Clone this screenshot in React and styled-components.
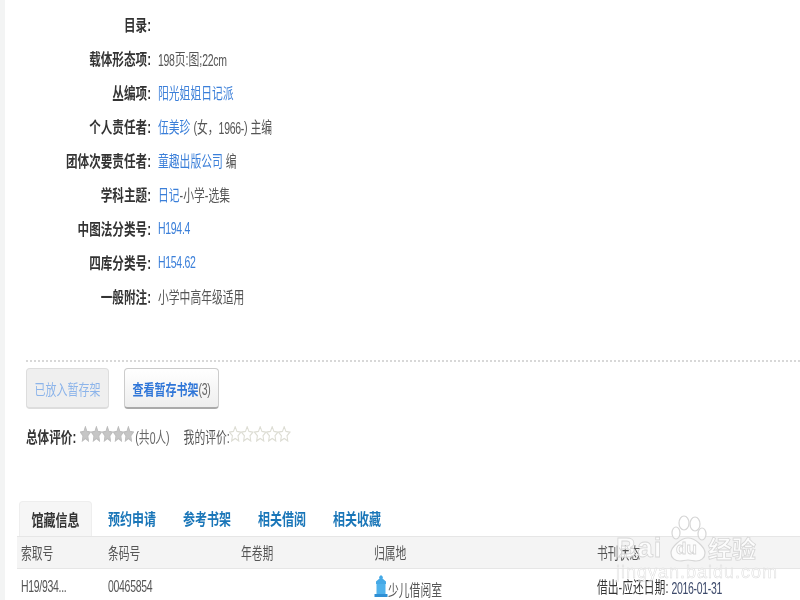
import React from 'react';
import styled, { createGlobalStyle, css } from 'styled-components';

const GlobalStyle = createGlobalStyle`
  html, body {
    margin: 0;
    padding: 0;
    background: #fff;
  }
  body {
    font-family: "Liberation Sans", "Noto Sans CJK SC", sans-serif;
    font-size: 11.6px;
    color: #444;
  }
`;

// the screenshot is squeezed sideways, so the text is taller than it is wide
const tall = css`
  display: inline-block;
  transform: scaleY(1.35);
`;

const tallBody = css`
  display: inline-block;
  font-size: 10.8px;
  transform: scaleY(1.45);
`;

const Page = styled.div`
  position: relative;
  width: 800px;
  height: 600px;
  overflow: hidden;
  box-sizing: border-box;
  border-left: 5px solid #f3f4f4;
  padding: 6.5px 0 0 3px;
  filter: blur(0.35px);
`;

const InfoList = styled.dl`
  margin: 0;
  display: flex;
  flex-direction: column;
`;

const InfoRow = styled.div`
  display: flex;
  align-items: center;
  height: 34.1px;
  gap: 7px;
`;

const Label = styled.dt`
  ${tall}
  width: 143px;
  text-align: right;
  font-weight: bold;
  color: #333;
`;

const Value = styled.dd`
  ${tallBody}
  margin: 0;
  color: #555;
`;

const Link = styled.a`
  color: #3b7fd9;
`;

const Narrow = styled.span`
  display: inline-block;
  font-size: 10.5px;
  letter-spacing: -0.3px;
  transform: scaleY(1.12);
`;

const Divider = styled.div`
  margin: 46.5px 0 0 18px;
  border-top: 2px dotted #d8d8d8;
`;

const Actions = styled.div`
  display: flex;
  gap: 15px;
  margin: 6px 0 0 18px;
`;

const Button = styled.button`
  box-sizing: border-box;
  width: ${p => p.$w}px;
  height: 41px;
  padding: 0;
  border: 1px solid ${p => (p.disabled ? '#ddd' : '#ccc')};
  border-bottom: 2px solid ${p => (p.disabled ? '#ddd' : '#aaa')};
  border-radius: 4px;
  background: ${p => (p.disabled ? '#efefef' : 'linear-gradient(#fff, #eee)')};
  color: ${p => (p.disabled ? '#8cb4ea' : '#2f76d8')};
  font: ${p => (p.disabled ? 'normal' : 'bold')} 11px "Liberation Sans", "Noto Sans CJK SC", sans-serif;
`;

const ButtonText = styled.span`
  ${tall}
`;

const Count = styled(Narrow)`
  color: #666;
  font-weight: normal;
`;

const Ratings = styled.div`
  display: flex;
  align-items: center;
  margin: 15px 0 0 18px;
  height: 24px;
`;

const RatingTitle = styled.strong`
  ${tall}
  color: #333;
`;

const RatingNote = styled.span`
  ${tallBody}
  color: #666;
`;

const MyRating = styled.span`
  ${tallBody}
  margin-left: 14px;
  color: #555;
`;

const Stars = styled.span`
  display: inline-flex;
  margin: 0 1px 4px ${p => p.$left}px;
`;

const Tabs = styled.div`
  display: flex;
  align-items: center;
  margin: 53px 0 0 11px;
  height: 35px;
`;

const Tab = styled.div`
  box-sizing: border-box;
  height: 35px;
  line-height: 38px;
  width: 75px;
  text-align: center;
  font-weight: bold;
  font-size: 12px;
  color: #1a76b8;
  ${p => p.$active && `
    width: 73px;
    margin-right: 2.5px;
    color: #333;
    background: #f6f6f6;
    border: 1px solid #eee;
    border-bottom: 0;
    border-radius: 4px 4px 0 0;
  `}
`;

const TabText = styled.span`
  ${tall}
`;

const Grid = styled.div`
  display: grid;
  grid-template-columns: 87px 133px 133px 223px 1fr;
`;

const HeadRow = styled(Grid)`
  margin-left: 9px;
  padding-left: 4px;
  height: 33px;
  align-items: center;
  background: #f4f4f4;
  border-top: 1px solid #e6e6e6;
  border-bottom: 1px solid #e6e6e6;
  box-sizing: border-box;
  color: #555;
`;

const BodyRow = styled(Grid)`
  margin-left: 13px;
  height: 35px;
  align-items: center;
  color: #555;
`;

const Cell = styled.span`
  ${tallBody}
`;

const Place = styled.span`
  display: flex;
  align-items: flex-end;
`;

const Due = styled.span`
  color: #333;
`;

const DueDate = styled(Narrow)`
  color: #3d4a6b;
`;

const Watermark = styled.div`
  position: absolute;
  left: 611px;
  top: 514px;
  width: 150px;
  pointer-events: none;
`;

const WmMain = styled.div`
  display: flex;
  align-items: flex-end;
  height: 48px;
  color: rgba(255, 255, 255, 0.75);
  -webkit-text-stroke: 0.8px #d6d6d6;
`;

const WmBai = styled.span`
  font: bold 28px/28px "Liberation Sans", sans-serif;
  letter-spacing: 1px;
  width: 52px;
`;

const WmPaw = styled.div`
  position: relative;
  width: 40px;
  height: 48px;
  flex: none;
`;

const WmDu = styled.span`
  position: absolute;
  left: 8px;
  bottom: 3px;
  font: bold 17px/20px "Liberation Sans", sans-serif;
`;

const WmJing = styled.span`
  font: bold 24px/28px "Noto Sans CJK SC", sans-serif;
  white-space: nowrap;
`;

const WmUrl = styled.div`
  margin-top: 1px;
  font: 18px/18px "Liberation Sans", sans-serif;
  letter-spacing: 1px;
  white-space: nowrap;
  color: rgba(255, 255, 255, 0.6);
  -webkit-text-stroke: 0.5px #dcdcdc;
`;

const Star = ({ filled, width }) => (
  <svg width={width} height="16" viewBox="0 0 24 24" preserveAspectRatio="none">
    <path
      d="M12 1l3.4 7.2 7.6 1-5.6 5.3 1.5 7.9L12 18.6l-6.9 3.8 1.5-7.9L1 9.2l7.6-1z"
      fill={filled ? '#c6c6c6' : '#fff'}
      stroke={filled ? '#bdbdbd' : '#ddddd4'}
      strokeWidth="2"
    />
  </svg>
);

const StarRow = ({ filled, width, left }) => (
  <Stars $left={left}>
    {[0, 1, 2, 3, 4].map(i => <Star key={i} filled={filled} width={width} />)}
  </Stars>
);

const PlaceIcon = () => (
  <svg width="14" height="23" viewBox="0 0 14 23" style={{ marginBottom: -1 }}>
    <path d="M7 0l2 2-.5 1.5L12 6.5V9H2V6.5l3.5-3L5 2z" fill="#45a9e6" />
    <rect x="2.5" y="9" width="9" height="10" fill="#4fb2ec" />
    <rect x="0.5" y="19" width="13" height="3" fill="#2f8fd4" />
  </svg>
);

const rows = [
  ['目录:'],
  ['载体形态项:', <><Narrow>198</Narrow>页:图;<Narrow>22cm</Narrow></>],
  ['丛编项:', <Link>阳光姐姐日记派</Link>],
  ['个人责任者:', <><Link>伍美珍</Link> (女，<Narrow>1966-</Narrow>) 主编</>],
  ['团体次要责任者:', <><Link>童趣出版公司</Link> 编</>],
  ['学科主题:', <><Link>日记</Link>-小学-选集</>],
  ['中图法分类号:', <Link><Narrow>H194.4</Narrow></Link>],
  ['四库分类号:', <Link><Narrow>H154.62</Narrow></Link>],
  ['一般附注:', '小学中高年级适用'],
];

const tabs = ['馆藏信息', '预约申请', '参考书架', '相关借阅', '相关收藏'];
const columns = ['索取号', '条码号', '年卷期', '归属地', '书刊状态'];

export default function App() {
  return (
    <Page>
      <GlobalStyle />
      <InfoList>
        {rows.map(([label, value]) => (
          <InfoRow key={label}>
            <Label>{label}</Label>
            <Value>{value}</Value>
          </InfoRow>
        ))}
      </InfoList>

      <Divider />

      <Actions>
        <Button disabled $w={83}><ButtonText>已放入暂存架</ButtonText></Button>
        <Button $w={95}><ButtonText>查看暂存书架<Count>(3)</Count></ButtonText></Button>
      </Actions>

      <Ratings>
        <RatingTitle>总体评价:</RatingTitle>
        <StarRow filled width={10.8} left={4} />
        <RatingNote>(共<Narrow>0</Narrow>人)</RatingNote>
        <MyRating>我的评价:</MyRating>
        <StarRow width={12.4} left={-1} />
      </Ratings>

      <Tabs>
        {tabs.map((tab, i) => (
          <Tab key={tab} $active={i === 0}><TabText>{tab}</TabText></Tab>
        ))}
      </Tabs>

      <HeadRow>
        {columns.map(col => <Cell key={col}>{col}</Cell>)}
      </HeadRow>
      <BodyRow>
        <Cell><Narrow>H19/934...</Narrow></Cell>
        <Cell><Narrow>00465854</Narrow></Cell>
        <span />
        <Place><PlaceIcon /><Cell>少儿借阅室</Cell></Place>
        <Cell><Due>借出-应还日期:</Due> <DueDate>2016-01-31</DueDate></Cell>
      </BodyRow>

      <Watermark>
        <WmMain>
          <WmBai>Bai</WmBai>
          <WmPaw>
            <svg width="40" height="48" viewBox="0 0 40 48">
              <g fill="rgba(255,255,255,0.7)" stroke="#d6d6d6" strokeWidth="1.2">
                <ellipse cx="8" cy="19" rx="4" ry="6" />
                <ellipse cx="16" cy="9" rx="5" ry="7" />
                <ellipse cx="27" cy="10" rx="5" ry="7" />
                <ellipse cx="34" cy="20" rx="4" ry="6" />
                <path d="M20 24c7 0 17 9 17 15 0 5-4 8-9 8-3 0-5-1-8-1s-5 1-8 1c-5 0-9-3-9-8 0-6 10-15 17-15z" />
              </g>
            </svg>
            <WmDu>du</WmDu>
          </WmPaw>
          <WmJing>经验</WmJing>
        </WmMain>
        <WmUrl>jingyan.baidu.com</WmUrl>
      </Watermark>
    </Page>
  );
}
